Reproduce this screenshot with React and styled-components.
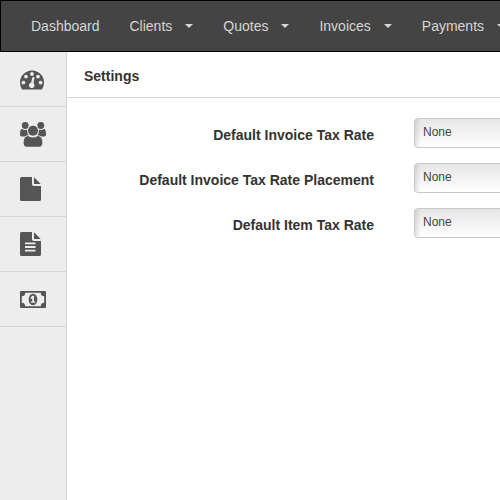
import React from "react";
import styled, { createGlobalStyle } from "styled-components";

const GlobalStyle = createGlobalStyle`
  *, *::before, *::after { box-sizing: border-box; }
  html, body { margin: 0; }
  body {
    overflow-x: hidden;
    background: #fff;
    color: #333;
    font: 14px/20px "Liberation Sans", Arial, sans-serif;
  }
`;

const Page = styled.div`
  display: flex;
  flex-direction: column;
  min-height: 100vh;
  overflow: hidden;
`;

const Navbar = styled.nav`
  display: flex;
  align-items: center;
  height: 52px;
  padding-left: 15px;
  background: #444;
  border: 1px solid #000;
  border-right: 0;
  overflow: hidden;
`;

const NavLink = styled.a`
  display: flex;
  flex: none;
  align-items: center;
  gap: 13px;
  padding: 15px;
  color: #d6d6d6;
  text-decoration: none;
  white-space: nowrap;
`;

const Caret = styled.span`
  border: 4px solid transparent;
  border-top-color: currentColor;
  border-bottom: 0;
`;

const Body = styled.div`
  display: flex;
  flex: 1;
`;

const Sidebar = styled.aside`
  flex: none;
  width: 67px;
  background: #ededed;
  border-right: 1px solid #d6d6d6;
`;

const SideLink = styled.a`
  display: flex;
  align-items: center;
  height: 55px;
  padding-left: 20px;
  color: #555;
  border-bottom: 1px solid #d6d6d6;
`;

const Icon = styled.svg`
  display: block;
  width: 26px;
  height: 26px;
  fill: currentColor;
`;

const Content = styled.main`
  flex: 1;
  min-width: 0;
`;

const Heading = styled.h1`
  margin: 0;
  padding: 14px 17px 11px;
  border-bottom: 1px solid #d6d6d6;
  font-size: 14px;
  line-height: 20px;
`;

const Form = styled.form`
  display: grid;
  gap: 15px;
  padding: 20px 0;
`;

const Field = styled.div`
  display: flex;
  align-items: center;
  gap: 40px;
`;

const Label = styled.label`
  flex: none;
  width: 307px;
  padding-top: 4px;
  text-align: right;
  font-weight: bold;
`;

const Select = styled.select`
  flex: none;
  width: 220px;
  height: 30px;
  padding: 0 8px 2px;
  appearance: none;
  color: #444;
  background:
    linear-gradient(to right, rgba(0, 0, 0, 0.1), transparent 6px),
    linear-gradient(#e6e6e6, #fff);
  border: 1px solid #c8c8c8;
  border-radius: 4px;
  font: 12px/16px "Liberation Sans", Arial, sans-serif;
`;

const PAGE_OUTLINE =
  "M0 2.5Q0 1 1.5 1H12V8.2Q12 10 13.8 10H21V23.5Q21 25 19.5 25H1.5Q0 25 0 23.5Z";
const PAGE_FOLD = "M14 1.3L20.7 8H14Z";

const DashboardIcon = () => (
  <Icon viewBox="0 -0.6 26 26" aria-hidden="true">
    <path
      fillRule="evenodd"
      d="M12 4A12 12 0 0 0 0 16Q0 19.4 1.8 22.4Q2.1 23 2.8 23H21.2Q21.9 23 22.2 22.4Q24 19.4 24 16A12 12 0 0 0 12 4Z
      M3.4 14.1a1.9 1.9 0 1 1 0 3.8a1.9 1.9 0 1 1 0-3.8Z
      M6 8.1a1.9 1.9 0 1 1 0 3.8a1.9 1.9 0 1 1 0-3.8Z
      M12 5.5a1.9 1.9 0 1 1 0 3.8a1.9 1.9 0 1 1 0-3.8Z
      M18 8.1a1.9 1.9 0 1 1 0 3.8a1.9 1.9 0 1 1 0-3.8Z
      M20.6 14.1a1.9 1.9 0 1 1 0 3.8a1.9 1.9 0 1 1 0-3.8Z
      M13.2 10.4Q14.7 10.3 14.5 11.6L13.4 16.4A2.8 2.8 0 1 1 11.2 15.9L12.3 11.2Q12.5 10.5 13.2 10.4Z"
    />
  </Icon>
);

const ClientsIcon = () => (
  <Icon viewBox="0 0 26 26" aria-hidden="true">
    <circle cx="5.2" cy="4.5" r="3.4" />
    <circle cx="20.8" cy="4.5" r="3.4" />
    <circle cx="13" cy="9.8" r="5" />
    <path d="M2 8Q5 9.8 7.1 8.4Q6.8 12.1 8.6 14.2Q6.5 14.2 4.8 15.5H2.7Q0 15.5 0 13.4Q0 8 2 8Z" />
    <path d="M24 8Q21 9.8 18.9 8.4Q19.2 12.1 17.4 14.2Q19.5 14.2 21.2 15.5H23.3Q26 15.5 26 13.4Q26 8 24 8Z" />
    <path d="M8.2 14.9Q13 17.9 17.8 14.9Q22.4 14.9 22.4 22.1Q22.4 25.7 19 25.7H7Q3.6 25.7 3.6 22.1Q3.6 14.9 8.2 14.9Z" />
  </Icon>
);

const QuotesIcon = () => (
  <Icon viewBox="0 0 26 26" aria-hidden="true">
    <path d={PAGE_OUTLINE} />
    <path d={PAGE_FOLD} />
  </Icon>
);

const InvoicesIcon = () => (
  <Icon viewBox="0 0 26 26" aria-hidden="true">
    <path
      fillRule="evenodd"
      d={`${PAGE_OUTLINE}M5 11.4V13.2H15.5V11.4ZM5 15.1V16.9H15.5V15.1ZM5 18.8V20.6H15.5V18.8Z`}
    />
    <path d={PAGE_FOLD} />
  </Icon>
);

const PaymentsIcon = () => (
  <Icon viewBox="0 0 26 26" aria-hidden="true">
    <path
      fillRule="evenodd"
      d="M1 5H25Q26 5 26 6V21Q26 22 25 22H1Q0 22 0 21V6Q0 5 1 5Z
      M5.2 6.7Q5.2 10.2 1.8 10.2V16.8Q5.2 16.8 5.2 20.3H20.8Q20.8 16.8 24.2 16.8V10.2Q20.8 10.2 20.8 6.7Z"
    />
    <path
      fillRule="evenodd"
      d="M13 7.8Q17.3 8.3 17.3 13.5T13 19.2Q8.7 18.7 8.7 13.5T13 7.8Z
      M12.4 9.8L10.3 11.8L11.3 12.9L12.2 12.1V15.4H10.8V16.8H15.4V15.4H14V9.8Z"
    />
  </Icon>
);

const navItems = [
  { label: "Dashboard" },
  { label: "Clients", menu: true },
  { label: "Quotes", menu: true },
  { label: "Invoices", menu: true },
  { label: "Payments", menu: true },
];

const sideItems = [
  { label: "Dashboard", Glyph: DashboardIcon },
  { label: "Clients", Glyph: ClientsIcon },
  { label: "Quotes", Glyph: QuotesIcon },
  { label: "Invoices", Glyph: InvoicesIcon },
  { label: "Payments", Glyph: PaymentsIcon },
];

const fields = [
  { id: "invoice-tax", label: "Default Invoice Tax Rate" },
  { id: "invoice-tax-placement", label: "Default Invoice Tax Rate Placement" },
  { id: "item-tax", label: "Default Item Tax Rate" },
];

export default function App() {
  return (
    <Page>
      <GlobalStyle />
      <Navbar>
        {navItems.map(({ label, menu }) => (
          <NavLink href="#" key={label}>
            {label}
            {menu && <Caret />}
          </NavLink>
        ))}
      </Navbar>
      <Body>
        <Sidebar>
          {sideItems.map(({ label, Glyph }) => (
            <SideLink href="#" key={label} aria-label={label}>
              <Glyph />
            </SideLink>
          ))}
        </Sidebar>
        <Content>
          <Heading>Settings</Heading>
          <Form>
            {fields.map(({ id, label }) => (
              <Field key={id}>
                <Label htmlFor={id}>{label}</Label>
                <Select id={id}>
                  <option>None</option>
                </Select>
              </Field>
            ))}
          </Form>
        </Content>
      </Body>
    </Page>
  );
}
